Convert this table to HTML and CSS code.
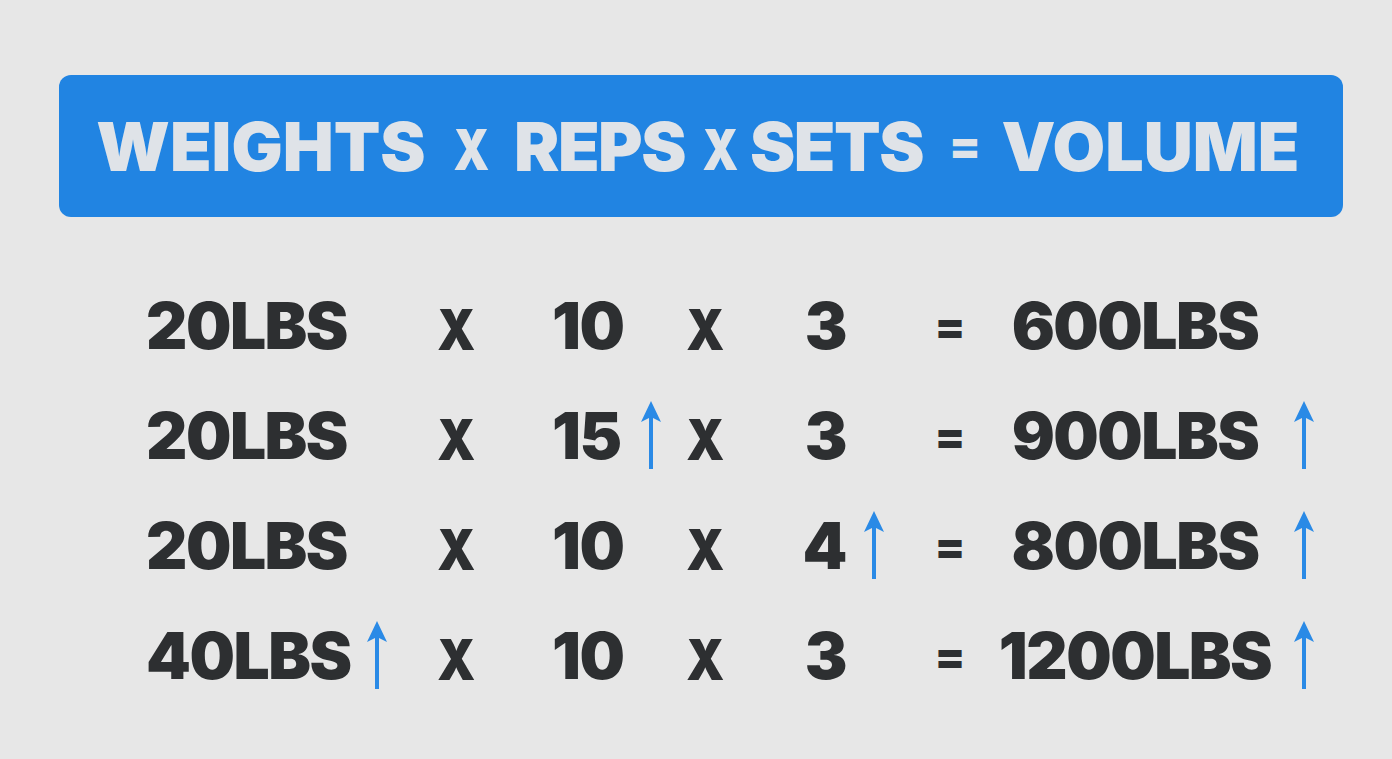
FILE: index.html
```html
<!DOCTYPE html>
<html>
<head>
<meta charset="utf-8">
<link rel="stylesheet" href="styles.css">
</head>
<body>
<div class="page">
  <div class="banner">
    <span class="item b1"><span class="word">WEIGHTS</span></span>
    <span class="item b2"><span class="op">x</span></span>
    <span class="item b3"><span class="word">REPS</span></span>
    <span class="item b4"><span class="op">x</span></span>
    <span class="item b5"><span class="word">SETS</span></span>
    <span class="item b6"><span class="eq">=</span></span>
    <span class="item b7"><span class="word">VOLUME</span></span>
  </div>
  <div class="table">
    <div class="cell c-weight">20LBS</div><div class="cell c-a1"></div><div class="cell c-x1"><span class="x">x</span></div><div class="cell c-reps">10</div><div class="cell c-a2"></div><div class="cell c-x2"><span class="x">x</span></div><div class="cell c-sets">3</div><div class="cell c-a3"></div><div class="cell c-eq"><span class="eqs">=</span></div><div class="cell c-res">600LBS</div><div class="cell c-a4"></div>

    <div class="cell c-weight">20LBS</div><div class="cell c-a1"></div><div class="cell c-x1"><span class="x">x</span></div><div class="cell c-reps">15</div><div class="cell c-a2"><svg class="arrow" viewBox="0 0 24 70"><path d="M12 68V14"/><path class="head" d="M12 0L22 21L12 16L2 21Z"/></svg></div><div class="cell c-x2"><span class="x">x</span></div><div class="cell c-sets">3</div><div class="cell c-a3"></div><div class="cell c-eq"><span class="eqs">=</span></div><div class="cell c-res">900LBS</div><div class="cell c-a4"><svg class="arrow" viewBox="0 0 24 70"><path d="M12 68V14"/><path class="head" d="M12 0L22 21L12 16L2 21Z"/></svg></div>

    <div class="cell c-weight">20LBS</div><div class="cell c-a1"></div><div class="cell c-x1"><span class="x">x</span></div><div class="cell c-reps">10</div><div class="cell c-a2"></div><div class="cell c-x2"><span class="x">x</span></div><div class="cell c-sets">4</div><div class="cell c-a3"><svg class="arrow" viewBox="0 0 24 70"><path d="M12 68V14"/><path class="head" d="M12 0L22 21L12 16L2 21Z"/></svg></div><div class="cell c-eq"><span class="eqs">=</span></div><div class="cell c-res">800LBS</div><div class="cell c-a4"><svg class="arrow" viewBox="0 0 24 70"><path d="M12 68V14"/><path class="head" d="M12 0L22 21L12 16L2 21Z"/></svg></div>

    <div class="cell c-weight">40LBS</div><div class="cell c-a1"><svg class="arrow" viewBox="0 0 24 70"><path d="M12 68V14"/><path class="head" d="M12 0L22 21L12 16L2 21Z"/></svg></div><div class="cell c-x1"><span class="x">x</span></div><div class="cell c-reps">10</div><div class="cell c-a2"></div><div class="cell c-x2"><span class="x">x</span></div><div class="cell c-sets">3</div><div class="cell c-a3"></div><div class="cell c-eq"><span class="eqs">=</span></div><div class="cell c-res">1200LBS</div><div class="cell c-a4"><svg class="arrow" viewBox="0 0 24 70"><path d="M12 68V14"/><path class="head" d="M12 0L22 21L12 16L2 21Z"/></svg></div>
  </div>
</div>
</body>
</html>
```

FILE: styles.css
```css
html, body {
  margin: 0;
  padding: 0;
  background: #e7e7e7;
}
body {
  width: 1392px;
  height: 759px;
  overflow: hidden;
  font-family: Inter, "Liberation Sans", sans-serif;
  font-weight: 900;
}
.page {
  padding: 75px 49px 0 59px;
}
.banner {
  height: 142px;
  background: #2184e2;
  border-radius: 12px;
  display: flex;
  align-items: center;
  padding-left: 31px;
  color: #dfe3e8;
  box-sizing: border-box;
}
.item {
  display: flex;
  justify-content: center;
  align-items: center;
  white-space: nowrap;
  height: 80px;
}
.b1 { width: 342px; }
.b2 { width: 78px; }
.b3 { width: 179px; }
.b4 { width: 62px; }
.b5 { width: 171px; }
.b6 { width: 86px; }
.b7 { width: 285px; }
.word {
  font-size: 68px;
  line-height: 1;
}
.b3 .word, .b5 .word { letter-spacing: -1.5px; }
.op {
  display: block;
  line-height: 1;
  text-transform: uppercase;
  font-size: 57px;
  transform: translateY(3px) scaleX(0.8);
}
.eq {
  display: block;
  font-size: 46px;
  line-height: 1;
  transform: translateY(-1px);
}

.table {
  display: grid;
  grid-template-columns: 216px 30px 128px 116px 30px 78px 118px 24px 128px 242px 96px;
  grid-auto-rows: 110px;
  margin-top: 54px;
  margin-left: 87px;
  color: #2d2f31;
  align-items: center;
}
.cell {
  font-size: 64px;
  letter-spacing: -1.5px;
  line-height: 1;
  height: 70px;
  display: flex;
  align-items: center;
  white-space: nowrap;
}
.c-weight { justify-content: flex-start; }
.c-x1, .c-x2, .c-eq, .c-res, .c-a1, .c-a2, .c-a3, .c-a4 { justify-content: center; }
.c-reps { justify-content: flex-start; padding-left: 32px; }
.c-sets { justify-content: flex-end; padding-right: 16px; }
.x {
  display: block;
  font-size: 57px;
  letter-spacing: 0;
  text-transform: uppercase;
  transform: translateY(3px) scaleX(0.85);
}
.eqs {
  display: block;
  font-size: 44px;
  letter-spacing: 0;
}
.arrow {
  width: 24px;
  height: 70px;
  display: block;
}
.arrow path {
  stroke: #2a8ae6;
  stroke-width: 4;
  fill: none;
}
.arrow path.head {
  fill: #2a8ae6;
  stroke: none;
}
```
